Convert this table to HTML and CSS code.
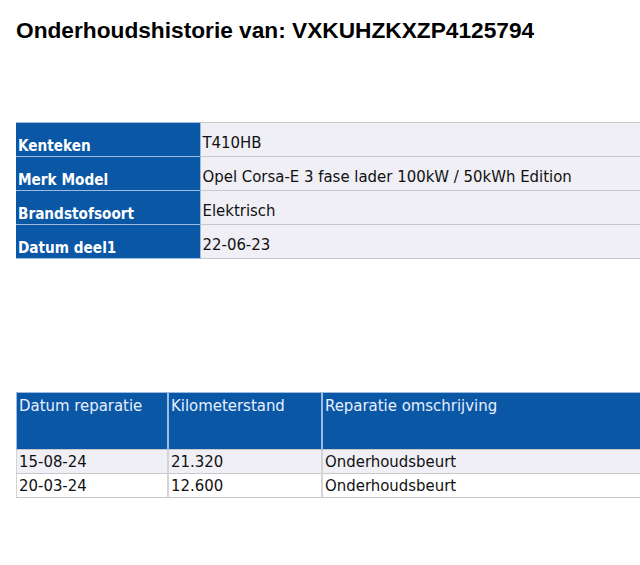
FILE: index.html
```html
<!DOCTYPE html>
<html>
<head>
<meta charset="utf-8">
<link rel="stylesheet" href="styles.css">
</head>
<body>
<h1 class="title">Onderhoudshistorie van: VXKUHZKXZP4125794</h1>
<table class="info">
  <colgroup><col class="lbl"><col></colgroup>
  <tr><th>Kenteken</th><td>T410HB</td></tr>
  <tr><th>Merk Model</th><td>Opel Corsa-E 3 fase lader 100kW / 50kWh Edition</td></tr>
  <tr><th>Brandstofsoort</th><td>Elektrisch</td></tr>
  <tr><th>Datum deel1</th><td>22-06-23</td></tr>
</table>
<table class="history">
  <tr class="head"><th class="c1">Datum reparatie</th><th class="c2">Kilometerstand</th><th class="c3">Reparatie omschrijving</th></tr>
  <tr class="odd"><td>15-08-24</td><td>21.320</td><td>Onderhoudsbeurt</td></tr>
  <tr class="even"><td>20-03-24</td><td>12.600</td><td>Onderhoudsbeurt</td></tr>
</table>
</body>
</html>
```
FILE: styles.css
```css
html, body { margin: 0; padding: 0; background: #fff; overflow: hidden; }
body { padding: 0 0 0 16px; width: 700px; }
.title {
  font-family: "Liberation Sans", Arial, sans-serif;
  font-weight: bold;
  font-size: 22.7px;
  margin: 0;
  padding-top: 17px;
  line-height: 26px;
  color: #000;
}
table { border-collapse: collapse; font-family: "DejaVu Sans Condensed", "DejaVu Sans", sans-serif; font-size: 16.6px; line-height: 18px; }
.info { margin-top: 79px; width: 640px; table-layout: fixed; }
.info col.lbl { width: 184px; }
.info tr { height: 34px; }
.info th {
  background: #0a57a6;
  color: #fff;
  text-align: left;
  font-weight: bold;
  font-size: 15.2px;
  padding: 0 2px 1px 2px;
  vertical-align: bottom;
  border-top: 1px solid #9dbbe0;
}
.info td {
  background: #efeff5;
  color: #111;
  padding: 0 2px 4px 2px;
  vertical-align: bottom;
  border-top: 1px solid #c8c8cc;
  border-left: 1px solid #9dbbe0;
}
.info tr:last-child td { border-bottom: 1px solid #c8c8cc; }
.info tr:last-child th { border-bottom: 1px solid #9dbbe0; }
.history { margin-top: 133px; width: 640px; }
.history tr.head { height: 57px; }
.history th {
  background: #0a57a6;
  color: #e8f0ff;
  font-weight: normal;
  text-align: left;
  vertical-align: top;
  padding: 4px 2px 0 2px;
  border-top: 1px solid #9dbbe0;
  border-left: 2px solid #9dbbe0;
}
.history th.c1 { border-left: 1px solid #9dbbe0; }
.history .c1 { width: 146px; }
.history .c2 { width: 148px; }
.history tr.odd, .history tr.even { height: 24px; }
.history td {
  padding: 0 2px;
  color: #111;
  border-top: 1px solid #c8c8cc;
  border-left: 2px solid #d4d4d8;
  border-bottom: 1px solid #c8c8cc;
}
.history td:first-child { border-left: 1px solid #d4d4d8; }
.history .odd td { background: #efeff5; }
.history .even td { background: #fff; }
```
